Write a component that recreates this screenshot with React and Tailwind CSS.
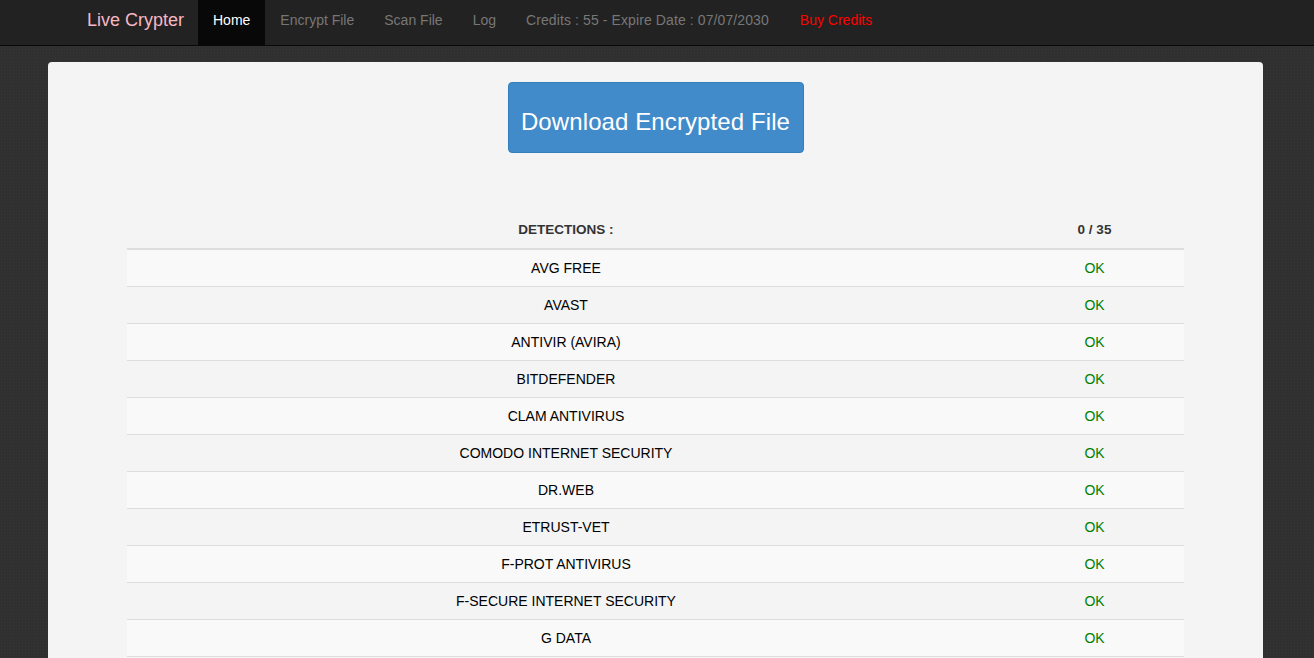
import React from 'react';

const engines = [
  'AVG FREE',
  'AVAST',
  'ANTIVIR (AVIRA)',
  'BITDEFENDER',
  'CLAM ANTIVIRUS',
  'COMODO INTERNET SECURITY',
  'DR.WEB',
  'ETRUST-VET',
  'F-PROT ANTIVIRUS',
  'F-SECURE INTERNET SECURITY',
  'G DATA',
  'IKARUS',
  'KASPERSKY ANTIVIRUS',
  'MCAFEE',
  'MS SECURITY ESSENTIALS',
  'ESET NOD32',
  'NORMAN',
  'NORTON ANTIVIRUS',
  'PANDA SECURITY',
];

const App = () => {
  return (
    <div className="min-h-screen bg-[#303030] bg-[radial-gradient(#363636_1px,transparent_1px)] bg-[size:3px_3px] font-['Liberation_Sans',Arial,sans-serif] text-[14px] leading-5 text-[#333]">
      {/* navbar */}
      <nav className="h-[46px] bg-[#222] border-b border-[#080808]">
        <div className="w-[1170px] mx-auto px-[15px] flex h-[45px]">
          <a className="w-[126px] shrink-0 -ml-[15px] pl-[15px] pt-[10px] text-[18px] leading-5 text-[#f6b8c4]">Live Crypter</a>
          <a className="px-[15px] pt-[10px] bg-[#080808] text-white">Home</a>
          <a className="pl-[15px] pr-[15px] pt-[10px] text-[#777]">Encrypt File</a>
          <a className="px-[15px] pt-[10px] text-[#777]">Scan File</a>
          <a className="px-[15px] pt-[10px] text-[#777]">Log</a>
          <a className="px-[15px] pt-[10px] text-[#777] tracking-[0.1px]">Credits : 55 - Expire Date : 07/07/2030</a>
          <a className="pl-[16px] px-[15px] pt-[10px] text-[#ff0000]">Buy Credits</a>
        </div>
      </nav>

      <div className="pl-[48px] pr-[51px] pt-[16px]">
        <div className="bg-[#f4f4f4] rounded-t-[4px] pt-[20px] px-[79px] pb-10">
          <div className="flex justify-center">
            <button className="w-[296px] h-[71px] pt-[7px] bg-[#428bca] border border-[#357ebd] rounded-[4px] text-white text-[24px] leading-[33px] tracking-[0.1px]">
              Download Encrypted File
            </button>
          </div>

          <table className="w-full mt-[59px] border-collapse">
            <thead>
              <tr className="border-b-2 border-[#ddd]">
                <th className="w-[878px] py-[8px] text-[13.5px] font-bold text-[#333] text-center leading-5 h-[37px]">DETECTIONS :</th>
                <th className="py-[8px] text-[13.5px] font-bold text-[#333] text-center leading-5">0 / 35</th>
              </tr>
            </thead>
            <tbody>
              {engines.map((e, i) => (
                <tr key={e} className={`border-b border-[#ddd] ${i % 2 === 0 ? 'bg-[#f9f9f9]' : 'bg-[#f4f4f4]'}`}>
                  <td className="py-[8px] text-center text-black h-[37px]">{e}</td>
                  <td className="py-[8px] text-center text-[#008000]">OK</td>
                </tr>
              ))}
            </tbody>
          </table>
        </div>
      </div>
    </div>
  );
};

export default App;
